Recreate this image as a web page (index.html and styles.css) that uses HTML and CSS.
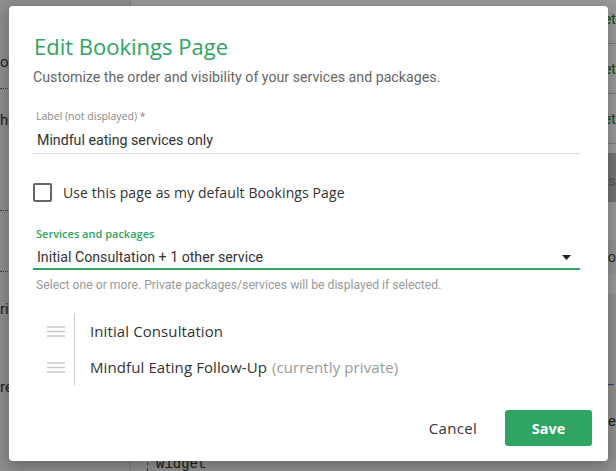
FILE: index.html
```html
<!DOCTYPE html>
<html lang="en">
<head>
  <meta charset="UTF-8">
  <meta name="viewport" content="width=device-width, initial-scale=1.0">
  <title>Edit Bookings Page</title>
  <link rel="stylesheet" href="styles.css">
</head>
<body>
  <div class="page">
    <aside class="sidebar">
      <div class="side-item first">or</div>
      <div class="side-item tall">he</div>
      <div class="side-item gap"></div>
      <div class="side-text">ri</div>
      <div class="side-text lower">re</div>
    </aside>
    <main class="main">
      <div class="row">et</div>
      <div class="row">et</div>
      <div class="row">et</div>
      <div class="band">ss</div>
      <div class="row light">o</div>
      <div class="code">
        <span class="dash">--</span>
        <span class="code-e">e</span>
        <span class="widget">widget</span>
      </div>
    </main>
  </div>

  <div class="overlay">
    <div class="dialog">
      <h1 class="title">Edit Bookings Page</h1>
      <p class="subtitle">Customize the order and visibility of your services and packages.</p>

      <div class="field">
        <label class="field-label">Label (not displayed) *</label>
        <div class="field-input">Mindful eating services only</div>
      </div>

      <label class="check">
        <span class="check-box"></span>
        <span class="check-text">Use this page as my default Bookings Page</span>
      </label>

      <div class="field field-active">
        <label class="field-label">Services and packages</label>
        <div class="field-input select">
          <span>Initial Consultation + 1 other service</span>
          <svg class="caret" width="9" height="5" viewBox="0 0 9 5"><path d="M0 0h9L4.5 5z" fill="#222"/></svg>
        </div>
      </div>
      <p class="helper">Select one or more. Private packages/services will be displayed if selected.</p>

      <ul class="sort-list">
        <li class="sort-item">
          <svg class="handle" width="18" height="11" viewBox="0 0 18 11"><path d="M0 1h18M0 5.5h18M0 10h18" stroke="#c8c8c8" stroke-width="1.6"/></svg>
          <span class="sort-name">Initial Consultation</span>
        </li>
        <li class="sort-item">
          <svg class="handle" width="18" height="11" viewBox="0 0 18 11"><path d="M0 1h18M0 5.5h18M0 10h18" stroke="#c8c8c8" stroke-width="1.6"/></svg>
          <span class="sort-name">Mindful Eating Follow-Up <span class="muted">(currently private)</span></span>
        </li>
      </ul>

      <div class="actions">
        <button class="btn btn-text">Cancel</button>
        <button class="btn btn-primary">Save</button>
      </div>
    </div>
  </div>
</body>
</html>
```

FILE: styles.css
```css
* {
  box-sizing: border-box;
}
body {
  margin: 0;
  width: 616px;
  height: 471px;
  overflow: hidden;
  font-family: Roboto, "Liberation Sans", sans-serif;
  position: relative;
}

/* page behind the dialog */
.page {
  display: flex;
  height: 471px;
  background: #fff;
}
.sidebar {
  width: 131px;
  background: #ebebeb;
  border-right: 1px solid #d4d4d4;
  padding-top: 52px;
  font-size: 15px;
  line-height: 20px;
  color: #333;
}
.side-item {
  border-bottom: 1px dotted #666;
}
.first {
  height: 37px;
}
.tall {
  height: 122px;
  padding-top: 21px;
}
.gap {
  height: 61px;
}
.side-text {
  margin-top: 27px;
  height: 36px;
}
.side-text.lower {
  margin-top: 42px;
}
.main {
  flex: 1;
  margin-top: -6px;
  display: flex;
  flex-direction: column;
  font-size: 15px;
  line-height: 20px;
}
.row {
  height: 50px;
  border-bottom: 1px solid #ccc;
  text-align: right;
  color: #1b7a3a;
  padding-top: 15px;
}
.band {
  margin-top: 9px;
  height: 49px;
  background: #c2c2c2;
  color: #999;
  text-align: right;
  padding-top: 18px;
  font-weight: 700;
}
.light {
  margin-top: 38px;
  height: 34px;
  padding-top: 7px;
  background: #f4f4f4;
  color: #555;
  border: none;
}
.code {
  flex: 1;
  margin-top: 20px;
  background: #f0f0f0;
  position: relative;
  color: #333;
}
.dash {
  position: absolute;
  right: 2px;
  top: 80px;
  color: #2a6fa8;
}
.code-e {
  position: absolute;
  right: 0;
  top: 117px;
}
.widget {
  position: absolute;
  left: 16px;
  bottom: 0;
  font-family: "Liberation Mono", monospace;
  font-size: 14px;
  line-height: 14px;
  border-left: 1px dashed #2a6fa8;
  padding-left: 8px;
}

/* modal */
.overlay {
  position: absolute;
  inset: 0;
  background: rgba(0, 0, 0, 0.4);
  display: flex;
  justify-content: center;
  align-items: flex-start;
  padding: 6px 8px 0 9px;
}
.dialog {
  width: 599px;
  height: 455px;
  background: #fff;
  border-radius: 4px;
  box-shadow: 0 4px 16px rgba(0, 0, 0, 0.3);
  padding: 28px 28px 0 24px;
  display: flex;
  flex-direction: column;
}
.title {
  margin: 0;
  font-family: "Open Sans", sans-serif;
  font-weight: 500;
  font-size: 22px;
  line-height: 24px;
  color: #2fa463;
  padding-left: 1px;
}
.subtitle {
  margin: 9px 0 0;
  font-size: 14.2px;
  line-height: 20px;
  color: #666;
}
.field {
  margin-top: 22px;
  padding-left: 3px;
  border-bottom: 1px solid #ddd;
  padding-bottom: 4px;
}
.field-label {
  display: block;
  font-family: "Open Sans", sans-serif;
  font-size: 10.5px;
  line-height: 14px;
  color: #888;
}
.field-input {
  margin-top: 8px;
  font-size: 14.2px;
  line-height: 18px;
  color: #333;
  padding-left: 1px;
}
.check {
  display: flex;
  align-items: center;
  margin-top: 29px;
  gap: 11px;
}
.check-box {
  width: 19px;
  height: 19px;
  border: 2px solid #666;
  border-radius: 2px;
}
.check-text {
  font-family: "Open Sans", sans-serif;
  font-size: 14px;
  letter-spacing: 0.1px;
  color: #333;
}
.field-active {
  margin-top: 25px;
  border-bottom: 2px solid #2fa463;
  padding-bottom: 2px;
}
.field-active .field-label {
  color: #2fa463;
  font-size: 11px;
  font-weight: 600;
}
.select {
  margin-top: 7px;
  display: flex;
  align-items: center;
  justify-content: space-between;
}
.caret {
  margin-right: 9px;
}
.helper {
  margin: 7px 0 0 3px;
  font-size: 12.2px;
  line-height: 16px;
  color: #999;
}
.sort-list {
  list-style: none;
  margin: 20px 0 0 14px;
  padding: 0;
  width: 360px;
}
.sort-item {
  display: flex;
  align-items: center;
  height: 36px;
}
.handle {
  flex: none;
}
.sort-name {
  margin-left: 9px;
  padding-left: 15px;
  border-left: 1px solid #ccc;
  height: 36px;
  display: flex;
  align-items: center;
  gap: 5px;
  font-family: "Open Sans", sans-serif;
  font-size: 15px;
  letter-spacing: 0.1px;
  color: #333;
  white-space: nowrap;
}
.muted {
  color: #999;
}
.actions {
  margin-top: auto;
  margin-bottom: 15px;
  margin-right: -12px;
  display: flex;
  justify-content: flex-end;
  align-items: center;
  gap: 28px;
}
.btn {
  border: none;
  font-family: "Open Sans", sans-serif;
  cursor: pointer;
}
.btn-text {
  background: none;
  color: #333;
  padding: 0;
  font-size: 15px;
  letter-spacing: 0.3px;
}
.btn-primary {
  width: 87px;
  height: 36px;
  background: #30a463;
  color: #fff;
  font-size: 14.5px;
  font-weight: 700;
  border-radius: 3px;
}
```
